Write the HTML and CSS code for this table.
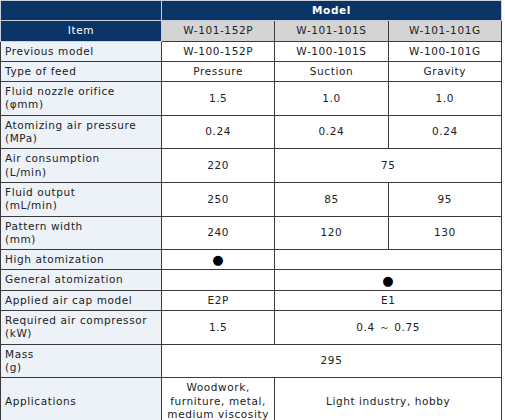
FILE: index.html
```html
<!DOCTYPE html>
<html lang="en">
<head>
  <meta charset="UTF-8">
  <title>Spray Gun Specifications</title>
  <link rel="stylesheet" href="styles.css">
</head>
<body>
  <table class="spec">
    <colgroup>
      <col class="col-item">
      <col class="col-model">
      <col class="col-model">
      <col class="col-model">
    </colgroup>
    <thead>
      <tr>
        <th class="head"></th>
        <th class="head model-title" colspan="3">Model</th>
      </tr>
      <tr>
        <th class="head">Item</th>
        <th class="model">W-101-152P</th>
        <th class="model">W-101-101S</th>
        <th class="model">W-101-101G</th>
      </tr>
    </thead>
    <tbody>
      <tr>
        <th>Previous model</th>
        <td>W-100-152P</td>
        <td>W-100-101S</td>
        <td>W-100-101G</td>
      </tr>
      <tr>
        <th>Type of feed</th>
        <td>Pressure</td>
        <td>Suction</td>
        <td>Gravity</td>
      </tr>
      <tr>
        <th>Fluid nozzle orifice<br>(φmm)</th>
        <td>1.5</td>
        <td>1.0</td>
        <td>1.0</td>
      </tr>
      <tr>
        <th>Atomizing air pressure<br>(MPa)</th>
        <td>0.24</td>
        <td>0.24</td>
        <td>0.24</td>
      </tr>
      <tr>
        <th>Air consumption<br>(L/min)</th>
        <td>220</td>
        <td colspan="2">75</td>
      </tr>
      <tr>
        <th>Fluid output<br>(mL/min)</th>
        <td>250</td>
        <td>85</td>
        <td>95</td>
      </tr>
      <tr>
        <th>Pattern width<br>(mm)</th>
        <td>240</td>
        <td>120</td>
        <td>130</td>
      </tr>
      <tr>
        <th>High atomization</th>
        <td class="dot">●</td>
        <td colspan="2"></td>
      </tr>
      <tr>
        <th>General atomization</th>
        <td></td>
        <td colspan="2" class="dot">●</td>
      </tr>
      <tr>
        <th>Applied air cap model</th>
        <td>E2P</td>
        <td colspan="2">E1</td>
      </tr>
      <tr>
        <th>Required air compressor<br>(kW)</th>
        <td>1.5</td>
        <td colspan="2">0.4 ～ 0.75</td>
      </tr>
      <tr>
        <th>Mass<br>(g)</th>
        <td colspan="3">295</td>
      </tr>
      <tr>
        <th>Applications</th>
        <td>Woodwork,<br>furniture, metal,<br>medium viscosity</td>
        <td colspan="2">Light industry, hobby</td>
      </tr>
    </tbody>
  </table>
</body>
</html>
```

FILE: styles.css
```css
body {
  margin: 0;
  background: #fff;
  font-family: "DejaVu Sans", Verdana, sans-serif;
  font-size: 10.5px;
  color: #222;
}

.spec {
  border-collapse: collapse;
  table-layout: fixed;
  width: 502px;
  letter-spacing: 0.6px;
  line-height: 13.3px;
}

.col-item {
  width: 161px;
}

.spec th,
.spec td {
  border: 1px solid #3a3a3a;
  padding: 3px 4px;
  font-weight: normal;
  vertical-align: middle;
}

.spec tbody th {
  background: #edf1f8;
  text-align: left;
}

.spec td {
  background: #fff;
  text-align: center;
}

.spec .head {
  background: #0b3466;
  color: #fff;
  text-align: center;
  border-color: #c9d0da;
}

.spec .model-title {
  font-weight: bold;
}

.spec .model {
  background: #d4d4d4;
  border-color: #3a3a3a;
}

.spec .dot {
  font-size: 13px;
  line-height: 13px;
  color: #000;
}
```
